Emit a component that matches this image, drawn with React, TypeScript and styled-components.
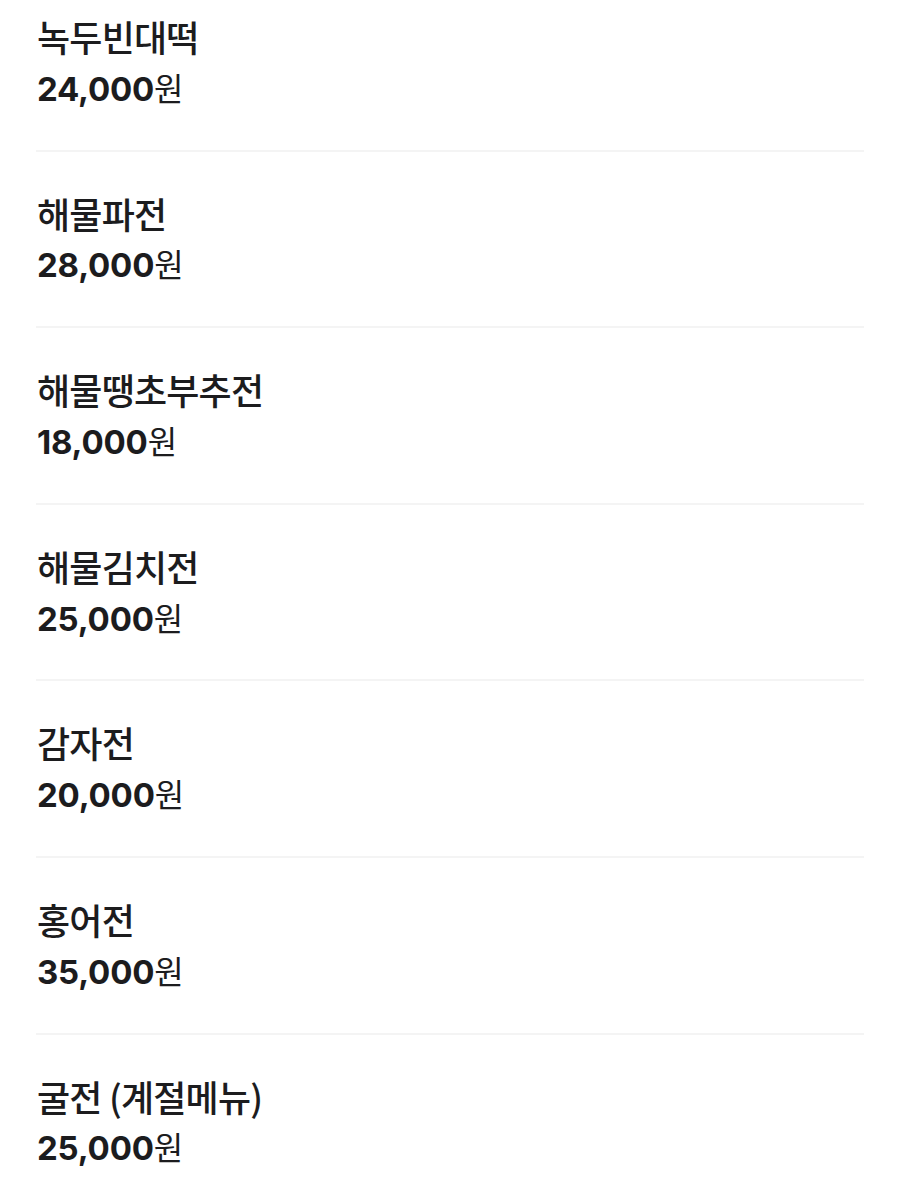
import React from 'react'
import styled, { createGlobalStyle } from 'styled-components'

const GlobalStyle = createGlobalStyle`
  html, body {
    margin: 0;
    padding: 0;
    background: #ffffff;
  }
  body {
    font-family: "Noto Sans CJK KR", "Noto Sans", sans-serif;
    color: #1c1c1e;
  }
`

const menu = [
  { name: '녹두빈대떡', price: '24,000' },
  { name: '해물파전', price: '28,000' },
  { name: '해물땡초부추전', price: '18,000' },
  { name: '해물김치전', price: '25,000' },
  { name: '감자전', price: '20,000' },
  { name: '홍어전', price: '35,000' },
  { name: '굴전 (계절메뉴)', price: '25,000' },
]

export default function App() {
  return (
    <>
      <GlobalStyle />
      <List>
        {menu.map((item) => (
          <Item key={item.name}>
            <Name>{item.name}</Name>
            <Price>
              <Amount>{item.price}</Amount>
              <Won>원</Won>
            </Price>
          </Item>
        ))}
      </List>
    </>
  )
}

const List = styled.ul`
  list-style: none;
  margin: 0;
  padding: 0 36px;
`

const Item = styled.li`
  display: flex;
  flex-direction: column;
  gap: 6.8px;
  padding: 39px 0 38.8px 1px;
  border-bottom: 2px solid #f4f4f4;
  &:first-child {
    padding-top: 14px;
  }
`

const Name = styled.div`
  font-family: "Noto Sans CJK KR", sans-serif;
  font-size: 36px;
  line-height: 44px;
  font-weight: 500;
  letter-spacing: -0.8px;
  color: #1c1c1e;
`

const Price = styled.div`
  display: flex;
  align-items: baseline;
  line-height: 44px;
`

const Amount = styled.span`
  font-family: Inter, "Noto Sans", sans-serif;
  font-size: 33px;
  font-weight: 700;
  letter-spacing: -0.2px;
  color: #1c1c1e;
`

const Won = styled.span`
  font-family: "Noto Sans CJK KR", sans-serif;
  font-size: 32px;
  font-weight: 400;
  color: #1c1c1e;
`
